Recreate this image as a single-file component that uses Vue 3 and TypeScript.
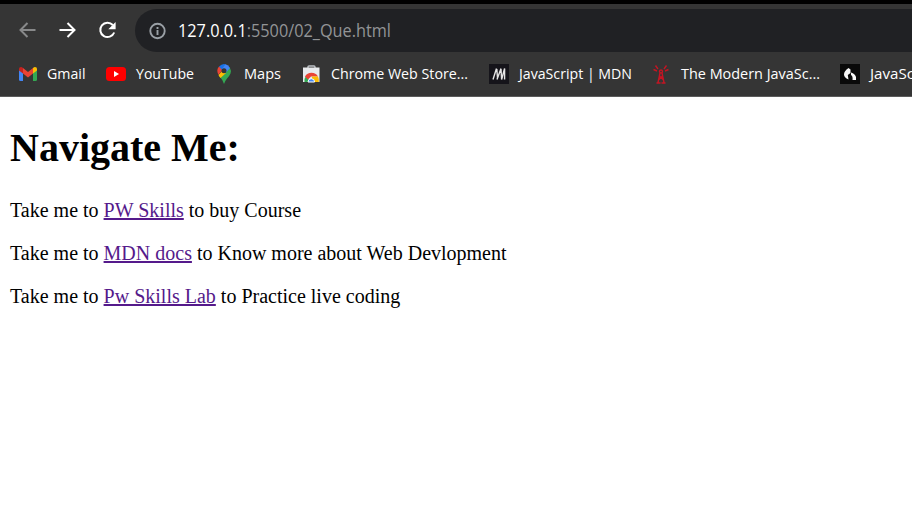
<script setup lang="ts">
interface Bookmark {
  icon: string
  label: string
  slot: number
  width: number
}

interface Destination {
  name: string
  purpose: string
}

const bookmarks: Bookmark[] = [
  { icon: 'gmail', label: 'Gmail', slot: 39, width: 38.5 },
  { icon: 'youtube', label: 'YouTube', slot: 58, width: 58 },
  { icon: 'maps', label: 'Maps', slot: 37, width: 37 },
  { icon: 'store', label: 'Chrome Web Store...', slot: 138, width: 137 },
  { icon: 'mdn', label: 'JavaScript | MDN', slot: 112, width: 113 },
  { icon: 'tower', label: 'The Modern JavaSc...', slot: 139, width: 139 },
  { icon: 'hashnode', label: 'JavaSc', slot: 43, width: 44 },
]

const destinations: Destination[] = [
  { name: 'PW Skills', purpose: 'to buy Course' },
  { name: 'MDN docs', purpose: 'to Know more about Web Devlopment' },
  { name: 'Pw Skills Lab', purpose: 'to Practice live coding' },
]
</script>

<template>
  <div class="window">
    <header class="chrome">
      <div class="toolbar">
        <nav class="controls">
          <svg class="back" width="20" height="20" viewBox="0 0 20 20"><path d="M17.500 10H2.500M9.500 3 2.500 10l7 7" /></svg>
          <svg class="forward" width="20" height="20" viewBox="0 0 20 20"><path d="M1.500 10h15M9.500 3l7 7-7 7" /></svg>
          <svg class="reload" width="20" height="20" viewBox="0 0 20 20">
            <path d="M14.800 5A7.200 7.200 0 1 0 16.200 12.500" />
            <path class="solid" d="M17.600 2v7.300h-7.300z" />
          </svg>
        </nav>
        <div class="address">
          <svg width="18" height="18" viewBox="0 0 18 18">
            <circle cx="9.500" cy="9" r="7.200" fill="none" stroke="#9aa0a6" stroke-width="1.900" />
            <path d="M9.500 8v5M9.500 5v1.900" stroke="#9aa0a6" stroke-width="1.900" />
          </svg>
          <svg class="url" width="230" height="28">
            <text x="0" y="20" textLength="213" lengthAdjust="spacingAndGlyphs"><tspan class="host">127.0.0.1</tspan>:5500/02_Que.html</text>
          </svg>
        </div>
      </div>
      <div class="bookmarks">
        <a v-for="item in bookmarks" :key="item.icon" class="bookmark">
          <svg class="favicon" width="20" height="20" viewBox="0 0 20 20">
            <g v-if="item.icon === 'gmail'">
              <path fill="#4285f4" d="M2 5v10.500q0 1.500 1.500 1.500H6V8z" />
              <path fill="#34a853" d="M16 8v9h2.500q1.500 0 1.500-1.500V5z" />
              <path fill="#ea4335" d="m6 4 5 4 5-4v5.500l-5 4-5-4z" />
              <path fill="#c5221f" d="M2 5q0-2 2-2 1 0 2 1v5.500L2 6.500z" />
              <path fill="#fbbc04" d="M16 4q1-1 2-1 2 0 2 2v1.500l-4 3z" />
            </g>
            <g v-else-if="item.icon === 'youtube'">
              <rect y="3" width="20" height="14" rx="3.500" fill="#f00" />
              <path d="m8 7 5 3-5 3z" fill="#fff" />
            </g>
            <g v-else-if="item.icon === 'maps'">
              <path fill="#34a853" d="M10 20Q9 16 5.500 12.500L15.800 3.500Q17.500 6.500 16.500 9.500 15.500 12 13 14.500 11 17 10 20" />
              <path fill="#fbbc04" d="M4.500 11 8 7l4 2-5.500 5Q5 12.500 4.500 11" />
              <path fill="#ea4335" d="m5 2.500 4 3.300-4.700 5Q2 6 5 2.500" />
              <path fill="#1a73e8" d="M5 2.500Q7.500 0 10 0L12 .400 8 6z" />
              <path fill="#4285f4" d="M11.500.200Q14.500 1 16 4l-4.500 5L8 5z" />
              <circle cx="10" cy="6.800" r="2.500" fill="#353535" />
            </g>
            <g v-else-if="item.icon === 'store'">
              <path d="M7 4V3q0-1 1-1h5q1 0 1 1v1" fill="none" stroke="#bdc1c6" stroke-width="1.400" />
              <path d="M2 3.500h16.500v14.500H2z" fill="#e8eaed" />
              <path d="M3.500 18a7.500 7.500 0 0 1 1.500-6l5 6z" fill="#34a853" />
              <path d="M4 12.500a7.500 7.500 0 0 1 13 0H10l-3 3z" fill="#ea4335" />
              <path d="M11 12.500h6q1.200 2.500.7 5.500H11z" fill="#fbbc04" />
              <path d="M7 18a3.300 3.300 0 0 1 6.600 0z" fill="#4285f4" stroke="#fff" />
            </g>
            <g v-else-if="item.icon === 'mdn'">
              <path d="M0 0h20v20H0z" fill="#15141a" />
              <path d="m4 15.500 3.500-11M8 15.500l4-11M7.800 5l.8 10M12 5l.6 10.500 3-11v11" fill="none" stroke="#e4e4e4" stroke-width="1.400" />
            </g>
            <g v-else-if="item.icon === 'tower'" fill="none" stroke="#c41523" stroke-width="1.400">
              <circle cx="10" cy="7.500" r="1.500" />
              <path d="M9 9 7 18.500M11 9l2 9.500M8.500 12l4 4M11.500 12l-4 4M5.500 19h4M10.500 19h4M7 5 4.500 1.500M13 5l2.500-3.500M6 7 2.500 5.500M14 7l3.500-1.500" />
            </g>
            <g v-else>
              <path d="M0 0h20v20H0z" fill="#090909" />
              <path d="M8.500 4Q4 7 4 10.500q0 3 4.500 5L7.800 11l2.700-2V5.500zM11 8.500q4 1 5 4.500v3h-3.500q.5-4-1.500-5z" fill="#f7f7f7" />
            </g>
          </svg>
          <svg class="label" :width="item.slot" height="24">
            <text x="0" y="17" :textLength="item.width" lengthAdjust="spacingAndGlyphs">{{ item.label }}</text>
          </svg>
        </a>
      </div>
    </header>
    <main class="page">
      <h1>Navigate Me:</h1>
      <p v-for="item in destinations" :key="item.name">Take me to <a href="#">{{ item.name }}</a> {{ item.purpose }}</p>
    </main>
  </div>
</template>

<style>
body {
  overflow: hidden;
}
</style>

<style scoped>
.window {
  height: 530px;
  overflow: hidden;
  background: #fff;
}

.chrome {
  box-sizing: border-box;
  height: 97px;
  overflow: hidden;
  border-top: 4px solid #000;
  border-bottom: 1px solid #5b5b5b;
  background: #353535;
  font-family: "Open Sans", "Noto Sans", sans-serif;
}

.toolbar {
  display: flex;
  padding-top: 5px;
}

.controls {
  display: flex;
  flex: none;
  align-items: center;
  gap: 20px;
  box-sizing: border-box;
  width: 135px;
  padding: 0 0 1px 18px;
}

.controls path {
  fill: none;
  stroke: #fff;
  stroke-width: 2;
}

.controls .back path {
  stroke: #88898a;
}

.controls .reload .solid {
  fill: #fff;
  stroke: none;
}

.address {
  display: flex;
  flex: 1;
  align-items: center;
  gap: 12px;
  box-sizing: border-box;
  height: 43px;
  padding-left: 13px;
  border-radius: 22px 0 0 22px;
  background: #202124;
}

.url {
  overflow: visible;
  font-size: 18px;
  fill: #929496;
}

.host {
  fill: #fff;
}

.bookmarks {
  display: flex;
  gap: 20px;
  padding: 10px 0 0 17px;
}

.bookmark {
  display: flex;
  flex: none;
  align-items: center;
  gap: 10px;
}

.label {
  overflow: visible;
  font-size: 15px;
  fill: #fff;
}

.page {
  display: flow-root;
  padding: 0 10px;
  color: #000;
  font: 20px "Liberation Serif", serif;
}

h1 {
  margin: 27px 0 28px;
  font-size: 40px;
  line-height: 47px;
}

p {
  margin: 0 0 20px;
  line-height: 23px;
}

.page a {
  color: #551a8b;
  text-decoration-thickness: 2px;
}
</style>
